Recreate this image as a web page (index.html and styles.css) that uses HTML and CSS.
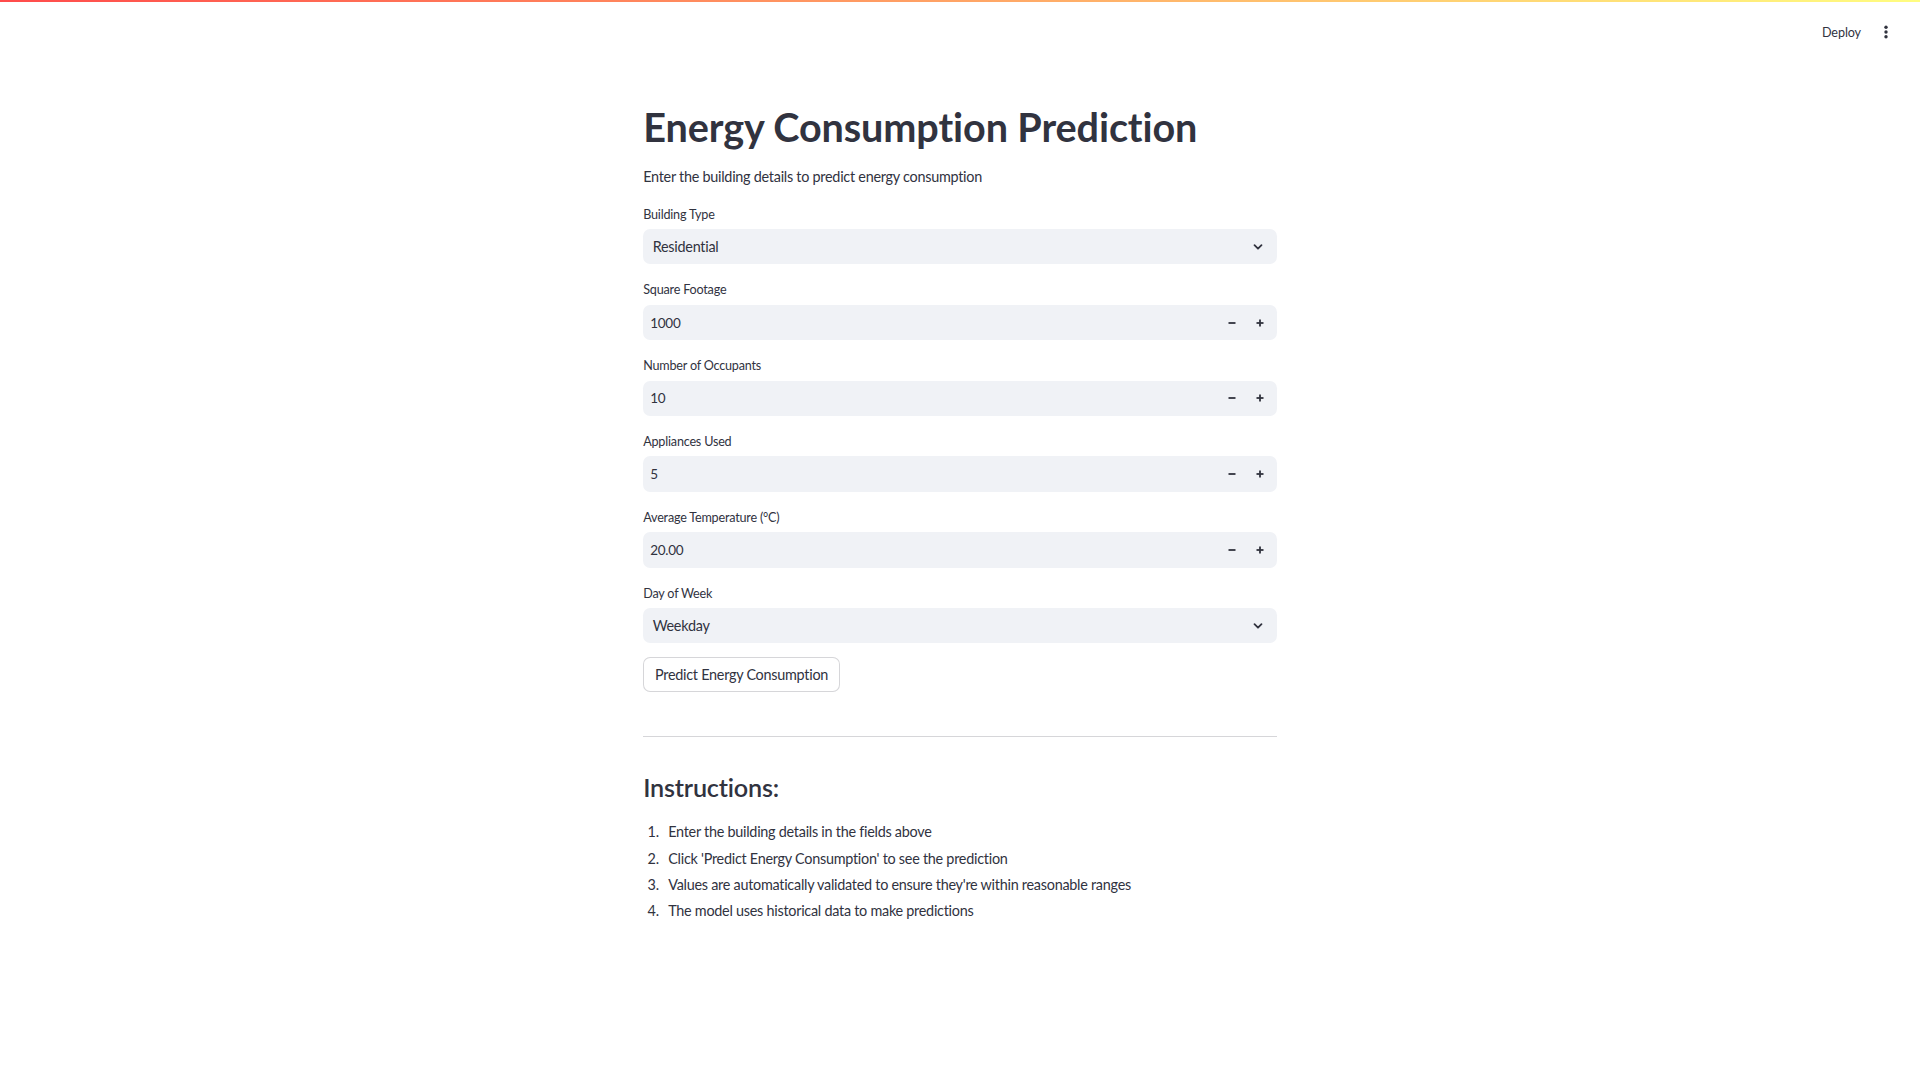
FILE: index.html
```html
<!DOCTYPE html>
<html lang="en">
<head>
<meta charset="utf-8">
<title>Energy Consumption Prediction</title>
<link rel="stylesheet" href="styles.css">
</head>
<body>
<div class="decoration"></div>
<header class="topbar">
  <span class="deploy">Deploy</span>
  <span class="menu">
    <svg width="16" height="16" viewBox="0 0 16 16"><circle cx="8" cy="3.2" r="1.7" fill="#31333F"/><circle cx="8" cy="8" r="1.7" fill="#31333F"/><circle cx="8" cy="12.8" r="1.7" fill="#31333F"/></svg>
  </span>
</header>
<main class="main">
  <h1 class="title">Energy Consumption Prediction</h1>
  <p class="subtitle">Enter the building details to predict energy consumption</p>

  <div class="widget first">
    <label class="label">Building Type</label>
    <div class="select">
      <span class="value">Residential</span>
      <svg class="chev" width="14" height="14" viewBox="0 0 14 14"><polyline points="3.5,5.2 7,8.7 10.5,5.2" fill="none" stroke="#31333F" stroke-width="1.8" stroke-linecap="round" stroke-linejoin="round"/></svg>
    </div>
  </div>

  <div class="widget">
    <label class="label">Square Footage</label>
    <div class="number">
      <span class="nvalue">1000</span>
      <span class="step"><svg width="10" height="10" viewBox="0 0 10 10"><rect x="1.5" y="4.1" width="7" height="1.8" fill="#31333F"/></svg></span>
      <span class="step"><svg width="10" height="10" viewBox="0 0 10 10"><rect x="1.5" y="4.1" width="7" height="1.8" fill="#31333F"/><rect x="4.1" y="1.5" width="1.8" height="7" fill="#31333F"/></svg></span>
    </div>
  </div>

  <div class="widget">
    <label class="label">Number of Occupants</label>
    <div class="number">
      <span class="nvalue">10</span>
      <span class="step"><svg width="10" height="10" viewBox="0 0 10 10"><rect x="1.5" y="4.1" width="7" height="1.8" fill="#31333F"/></svg></span>
      <span class="step"><svg width="10" height="10" viewBox="0 0 10 10"><rect x="1.5" y="4.1" width="7" height="1.8" fill="#31333F"/><rect x="4.1" y="1.5" width="1.8" height="7" fill="#31333F"/></svg></span>
    </div>
  </div>

  <div class="widget">
    <label class="label">Appliances Used</label>
    <div class="number">
      <span class="nvalue">5</span>
      <span class="step"><svg width="10" height="10" viewBox="0 0 10 10"><rect x="1.5" y="4.1" width="7" height="1.8" fill="#31333F"/></svg></span>
      <span class="step"><svg width="10" height="10" viewBox="0 0 10 10"><rect x="1.5" y="4.1" width="7" height="1.8" fill="#31333F"/><rect x="4.1" y="1.5" width="1.8" height="7" fill="#31333F"/></svg></span>
    </div>
  </div>

  <div class="widget">
    <label class="label">Average Temperature (°C)</label>
    <div class="number">
      <span class="nvalue">20.00</span>
      <span class="step"><svg width="10" height="10" viewBox="0 0 10 10"><rect x="1.5" y="4.1" width="7" height="1.8" fill="#31333F"/></svg></span>
      <span class="step"><svg width="10" height="10" viewBox="0 0 10 10"><rect x="1.5" y="4.1" width="7" height="1.8" fill="#31333F"/><rect x="4.1" y="1.5" width="1.8" height="7" fill="#31333F"/></svg></span>
    </div>
  </div>

  <div class="widget">
    <label class="label">Day of Week</label>
    <div class="select">
      <span class="value">Weekday</span>
      <svg class="chev" width="14" height="14" viewBox="0 0 14 14"><polyline points="3.5,5.2 7,8.7 10.5,5.2" fill="none" stroke="#31333F" stroke-width="1.8" stroke-linecap="round" stroke-linejoin="round"/></svg>
    </div>
  </div>

  <div class="btnrow"><button class="btn">Predict Energy Consumption</button></div>

  <hr class="rule">

  <h3 class="h3">Instructions:</h3>
  <ol class="steps">
    <li>Enter the building details in the fields above</li>
    <li>Click 'Predict Energy Consumption' to see the prediction</li>
    <li>Values are automatically validated to ensure they're within reasonable ranges</li>
    <li>The model uses historical data to make predictions</li>
  </ol>
</main>
</body>
</html>
```

FILE: styles.css
```css
* { box-sizing: border-box; }
html, body { margin: 0; padding: 0; background: #ffffff; }
body {
  font-family: "Lato", "Open Sans", sans-serif;
  color: #31333F;
  font-size: 14.4px;
  letter-spacing: -0.26px;
}
.decoration {
  height: 2px;
  background: linear-gradient(90deg, rgb(255, 75, 75), rgb(255, 253, 128));
}
.topbar {
  height: 60px;
  display: flex;
  align-items: center;
  justify-content: flex-end;
  padding-right: 26px;
  gap: 17px;
}
.deploy { font-size: 12.6px; color: #31333F; letter-spacing: -0.1px; }
.menu { display: flex; align-items: center; }
.main {
  width: 633.6px;
  margin: 0 auto;
  padding-top: 23px;
  display: flex;
  flex-direction: column;
}
.title {
  margin: 0;
  padding-top: 18px;
  font-size: 39.6px;
  line-height: 47px;
  font-weight: 700;
  letter-spacing: -0.1px;
  color: #31333F;
}
.subtitle {
  margin: 14.5px 0 0;
  line-height: 23px;
  font-size: 14.4px;
}
.widget {
  margin-top: 15.9px;
  display: flex;
  flex-direction: column;
}
.widget.first { margin-top: 17.1px; }
.label {
  font-size: 12.6px;
  line-height: 20px;
  margin-bottom: 4.4px;
  letter-spacing: -0.2px;
}
.select, .number {
  height: 35.5px;
  background: #F0F2F6;
  border-radius: 7.2px;
  display: flex;
  align-items: center;
}
.select { padding: 0 12px 0 9.5px; justify-content: space-between; }
.value { font-size: 14.4px; }
.chev { display: block; }
.number { padding-left: 7px; padding-right: 2px; }
.nvalue { flex: 1; font-size: 13.5px; }
.step {
  width: 28.8px;
  height: 32px;
  display: flex;
  align-items: center;
  justify-content: center;
}
.btnrow { margin-top: 13.5px; display: flex; }
.btn {
  font-family: inherit;
  font-size: 14.4px;
  letter-spacing: -0.26px;
  color: #31333F;
  background: #ffffff;
  border: 1px solid rgba(49, 51, 63, 0.2);
  border-radius: 7.2px;
  height: 35px;
  padding: 0 10.8px;
}
.rule {
  margin: 44px 0 0;
  border: none;
  border-top: 1px solid rgba(49, 51, 63, 0.2);
}
.h3 {
  margin: 35.5px 0 0;
  font-size: 25.2px;
  line-height: 30px;
  font-weight: 600;
  letter-spacing: -0.2px;
}
.steps {
  margin: 18px 0 0;
  padding-left: 19px;
}
.steps li {
  padding-left: 6px;
  line-height: 23px;
  margin-bottom: 3.3px;
}
```
